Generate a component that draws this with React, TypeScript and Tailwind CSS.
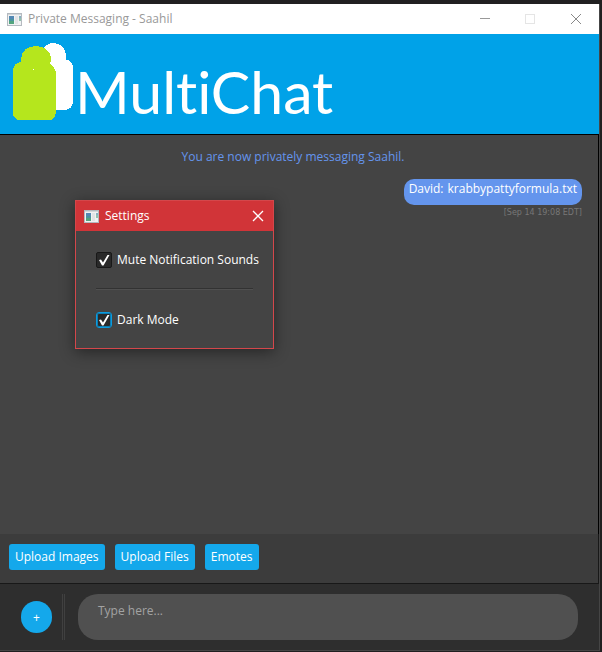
import type { ReactNode } from "react";

function AppIcon() {
  return (
    <svg width="15" height="13" viewBox="0 0 15 13" aria-hidden="true" className="shrink-0">
      <rect x="0.5" y="0.5" width="14" height="12" fill="#f1f2f3" stroke="#b4bac0" />
      <rect x="1" y="1" width="13" height="1" fill="#d3d7da" />
      <rect x="2" y="3" width="5" height="3" fill="#5388b4" />
      <rect x="2" y="6" width="5" height="2" fill="#4a94a0" />
      <rect x="2" y="8" width="5" height="3" fill="#52a47e" />
      <rect x="8" y="3" width="3" height="8" fill="#e2e4e6" />
      <rect x="12" y="3" width="2" height="2" fill="#86afc2" />
      <rect x="12" y="5" width="2" height="3" fill="#93c2ae" />
    </svg>
  );
}

function Logo() {
  return (
    <svg
      width="60"
      height="78"
      viewBox="0 0 60 78"
      shapeRendering="crispEdges"
      aria-hidden="true"
      className="shrink-0"
    >
      <path
        fill="#fff"
        d="M30 5C33 2 36 0 41 0C48 0 53 6 53 12V17C57 17 60 20 60 25V59C60 64 56 67 51 67H40Z"
      />
      <path
        fill="#b5e61d"
        d="M8 19V16C8 8 15 3 23 3C32 3 38 9 38 15V17L37 21C41 24 43 27 43 31V70C42 74 40 77 37 77H6C3 77 0 74 0 70V28C0 23 3 19 8 19Z"
      />
      <rect x="20" y="26" width="1" height="1" fill="#fff" />
    </svg>
  );
}

function ToolButton({ children }: { children: ReactNode }) {
  return (
    <button type="button" className="h-[26px] rounded-[3px] bg-[#14a8eb] px-[6px] text-white">
      {children}
    </button>
  );
}

function Check({ id, label }: { id: string; label: string }) {
  return (
    <div className="flex h-4 items-center gap-[5px]">
      <span className="grid shrink-0">
        <input
          id={id}
          type="checkbox"
          defaultChecked
          className={
            id === "dark"
              ? "col-start-1 row-start-1 size-4 appearance-none rounded-[3px] border border-[#0b9ce0] bg-[#292929] shadow-[inset_0_0_0_1px_#0b7db3]"
              : "col-start-1 row-start-1 size-4 appearance-none rounded-[2px] border border-[#181818] bg-[#292929]"
          }
        />
        <svg
          viewBox="0 0 16 16"
          aria-hidden="true"
          className="pointer-events-none col-start-1 row-start-1 size-4"
        >
          <path d="M3 8L5 7.5L7 10.5L11.5 3H13.5L7.5 13.5H6Z" fill="#fff" />
        </svg>
      </span>
      <label htmlFor={id} className="whitespace-nowrap text-white">
        {label}
      </label>
    </div>
  );
}

function SettingsDialog() {
  return (
    <section
      role="dialog"
      aria-label="Settings"
      className="absolute top-[65px] left-[75px] w-[199px] border border-[#d4474b] bg-[#444] shadow-[0_3px_14px_rgba(0,0,0,0.45)]"
    >
      <header className="flex h-[30px] items-center bg-[#d13438] pr-[9px] pl-2 text-white">
        <AppIcon />
        <h2 className="ml-[6px] flex-1">Settings</h2>
        <button type="button" aria-label="Close settings">
          <svg width="12" height="12" viewBox="0 0 12 12" stroke="#fff" strokeWidth="1.3">
            <path d="M1 1L11 11M11 1L1 11" />
          </svg>
        </button>
      </header>
      <div className="flex flex-col px-5 pt-[21px] pb-5">
        <Check id="mute" label="Mute Notification Sounds" />
        <hr className="mt-5 mb-[22px] h-[2px] border-t border-b border-t-[#323232] border-b-[#505050]" />
        <Check id="dark" label="Dark Mode" />
      </div>
    </section>
  );
}

export default function App() {
  return (
    <div className="flex min-h-screen flex-col bg-[#212021] pt-1 pr-[2px] pb-px font-['Open_Sans','Noto_Sans',sans-serif] text-[12px] leading-4">
      <div className="flex flex-1 flex-col border-r border-b border-[#454545] bg-[#2e2e2e]">
        <header className="flex h-[30px] items-center bg-white pr-[17px] pl-[7px]">
          <AppIcon />
          <h1 className="ml-[6px] flex-1 text-[#999]">Private Messaging - Saahil</h1>
          <div className="flex items-center gap-[34px]">
            <button type="button" aria-label="Minimize">
              <svg width="11" height="11" viewBox="0 0 11 11">
                <path d="M0 4.5H10" stroke="#999" />
              </svg>
            </button>
            <button type="button" aria-label="Maximize" disabled>
              <svg width="11" height="11" viewBox="0 0 11 11">
                <rect x="0.5" y="0.5" width="9" height="9" fill="none" stroke="#e5e5e5" />
              </svg>
            </button>
            <button type="button" aria-label="Close">
              <svg width="12" height="12" viewBox="0 0 12 12" stroke="#888">
                <path d="M1 1L11 11M11 1L1 11" />
              </svg>
            </button>
          </div>
        </header>

        <div className="flex h-[101px] items-start gap-[2px] border-b border-black bg-[#00a2e8] pt-[9px] pl-[13px]">
          <Logo />
          <p className="mt-[14px] font-['Lato','Open_Sans',sans-serif] text-[59px] leading-[70px] text-white [font-variant-ligatures:none]">
            MultiChat
          </p>
        </div>

        <main className="relative flex-1 border-r border-black bg-[#444]">
          <p className="pt-[14px] pr-3 text-center text-[#6495ed]">
            You are now privately messaging Saahil.
          </p>
          <div className="mt-[14px] mr-4 flex flex-col items-end">
            <p className="flex h-[26px] gap-1 rounded-[10px] bg-[#6495ed] px-[5px] pt-[2px] text-white">
              <span>David:</span>
              <a href="#file">krabbypattyformula.txt</a>
            </p>
            <time className="font-['DejaVu_Sans',sans-serif] text-[8px] leading-4 text-[#777]">
              [Sep 14 19:08 EDT]
            </time>
          </div>
          <SettingsDialog />
        </main>

        <div className="flex h-[50px] items-start gap-[10px] border-r border-b border-[#181818] bg-[#3c3c3c] pt-[10px] pl-[9px]">
          <ToolButton>Upload Images</ToolButton>
          <ToolButton>Upload Files</ToolButton>
          <ToolButton>Emotes</ToolButton>
        </div>

        <footer className="flex h-[66px] items-center pr-[21px] pl-[21px]">
          <button
            type="button"
            aria-label="Add"
            className="h-8 w-[31px] rounded-full bg-[#14a8eb] pt-[2px] text-white"
          >
            +
          </button>
          <div className="mr-[13px] ml-[10px] h-[46px] w-[3px] border-x border-[#404040]" />
          <textarea
            aria-label="Message"
            placeholder="Type here..."
            className="h-[46px] min-w-0 flex-1 resize-none rounded-[20px] bg-[#505050] px-5 pt-[9px] text-white outline-none placeholder:text-[#a3a3a3]"
          />
        </footer>
      </div>
    </div>
  );
}
